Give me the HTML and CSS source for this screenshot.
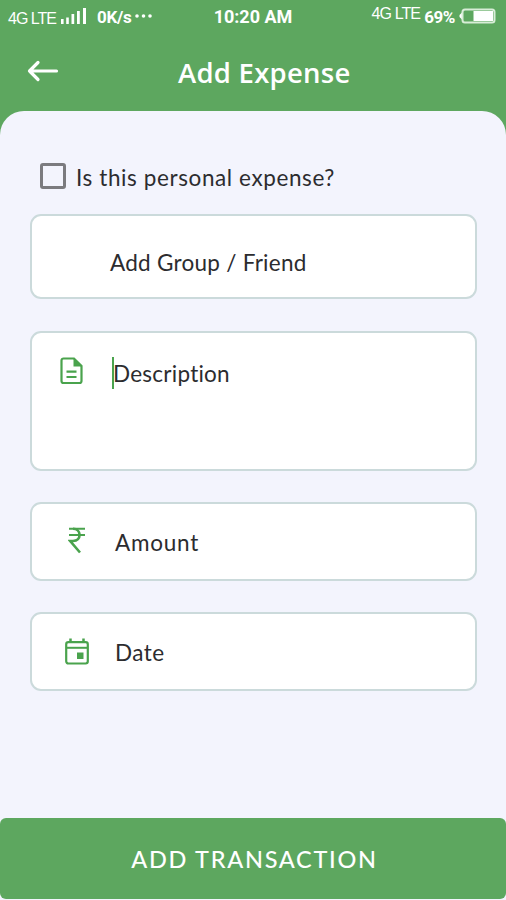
FILE: index.html
```html
<!DOCTYPE html>
<html lang="en">
<head>
<meta charset="utf-8">
<title>Add Expense</title>
<link rel="stylesheet" href="styles.css">
</head>
<body>
<div class="screen">
  <div class="status">
    <div class="status-left">
      <span class="net">4G LTE</span>
      <svg class="signal" width="28" height="18" viewBox="0 0 28 18" fill="#fff"><path d="M1 12h2.6v5H1zM6.2 10.500h2.600v6.500h-2.600zM11.500 7h2.700v10h-2.700zM17 4h2.800v13H17zM23 1h3v16h-3z"/></svg>
      <span class="speed">0K/s</span>
      <svg class="dots" width="19" height="4" viewBox="0 0 19 4" fill="#fff"><circle cx="2" cy="2" r="1.800"/><circle cx="8.500" cy="2" r="1.800"/><circle cx="15" cy="2" r="1.800"/></svg>
    </div>
    <span class="clock">10:20 AM</span>
    <div class="status-right">
      <span class="net net-right">4G LTE</span>
      <span class="battery-text">69%</span>
      <svg class="battery" width="37" height="16" viewBox="0 0 37 16"><path d="M3 4.500L0.500 7v2L3 11.500z" fill="#fff"/><rect x="3.500" y="1.500" width="32" height="13" rx="2.500" fill="none" stroke="#d8edd7" stroke-width="2"/><path d="M14.500 3h19.500v10H14.500z" fill="#fff"/></svg>
    </div>
  </div>
  <header class="header">
    <svg class="back" width="32" height="22" viewBox="0 0 32 22" fill="none" stroke="#fff" stroke-width="3.200" stroke-linecap="round" stroke-linejoin="round"><path d="M29.500 11H2.500M11 2.500L2.500 11l8.500 8.500"/></svg>
    <h1 class="title">Add Expense</h1>
  </header>
  <main class="sheet">
    <label class="check-row"><span class="box"></span><span class="text question">Is this personal expense?</span></label>
    <div class="field group"><span class="text group-text">Add Group / Friend</span></div>
    <div class="field description">
      <svg class="icon" width="24" height="28" viewBox="0 0 24 28" fill="none" stroke="#4aa34d"><path d="M3.500 1.500h10.500l7.500 7.500v15a2 2 0 0 1-2 2h-16a2 2 0 0 1-2-2v-20.500a2 2 0 0 1 2-2z" stroke-width="2.200"/><path d="M13.500 1.500v8h8z" fill="#4aa34d" stroke="none"/><path d="M6.500 14.700h10M6.500 20h10" stroke-width="2.200"/></svg>
      <span class="caret"></span><span class="text description-text">Description</span>
    </div>
    <div class="field amount">
      <svg class="icon" width="18" height="28" viewBox="0 0 18 28" fill="none" stroke="#4aa34d"><path d="M1 1.800h16M1 8h16" stroke-width="2"/><path d="M5 1.800c8.500 0 9 12 0 12.200H2.200L12 25.500" stroke-width="2.600"/></svg>
      <span class="text amount-text">Amount</span>
    </div>
    <div class="field date">
      <svg class="icon" width="24" height="27" viewBox="0 0 24 27" fill="none" stroke="#4aa34d"><rect x="1.200" y="4.200" width="21.600" height="21.300" rx="2.200" stroke-width="2.200"/><path d="M1 9.800h22" stroke-width="2"/><path d="M5.500 0.500v3.500M18.500 0.500v3.500" stroke-width="2.500"/><path d="M12 14.500h6.500V21H12z" fill="#4aa34d" stroke="none"/></svg>
      <span class="text date-text">Date</span>
    </div>
  </main>
  <div class="footer"><button class="submit"><span class="submit-text">ADD TRANSACTION</span></button></div>
</div>
</body>
</html>
```

FILE: styles.css
```css
* { box-sizing: border-box; }
body { margin: 0; background: #f3f4fd; }
.screen { width: 506px; height: 900px; display: flex; flex-direction: column; overflow: hidden; background: linear-gradient(#5da75f 0 150px, #f3f4fd 150px); }
.status { height: 34px; display: grid; grid-template-columns: 1fr auto 1fr; color: #fff; font-family: Roboto, sans-serif; white-space: nowrap; }
.status-left, .status-right { display: flex; align-items: flex-start; }
.status-left { padding-left: 8px; }
.status-right { justify-content: flex-end; padding-right: 10px; }
.net { font: 16px/18px "Liberation Sans", sans-serif; letter-spacing: -1px; margin-top: 10px; }
.net-right { letter-spacing: -0.900px; margin-top: 5px; margin-right: 4px; }
.signal { margin: 7px 0 0 4px; }
.speed { font-size: 17px; line-height: 20px; font-weight: 700; letter-spacing: -0.300px; margin: 7px 0 0 9px; }
.dots { margin: 14px 0 0 4px; }
.clock { font-size: 18px; line-height: 20px; font-weight: 700; margin-top: 7px; }
.battery-text { font-size: 17px; line-height: 20px; font-weight: 700; letter-spacing: -0.400px; margin-top: 7px; }
.battery { margin: 8px 0 0 4px; }
.header { height: 77px; display: grid; grid-template-columns: 178px 1fr; align-items: start; }
.back { margin: 26px 0 0 27px; }
.title { margin: 21px 0 0; color: #fff; font: 650 27.500px/36px "Open Sans", sans-serif; letter-spacing: 0.250px; white-space: nowrap; }
.sheet { height: 707px; padding: 52px 29px 0 30px; display: flex; flex-direction: column; background: #f3f4fd; border-radius: 24px 24px 0 0; }
.check-row { height: 51px; display: flex; align-items: flex-start; padding-left: 10px; }
.box { width: 26px; height: 26px; border: 3px solid #7b7b7f; border-radius: 3px; }
.text { color: #2c2c2f; font: 22.500px/29px Lato, sans-serif; font-variant-ligatures: none; white-space: nowrap; }
.question { margin-left: 10px; letter-spacing: 0.600px; }
.group-text { letter-spacing: 0.260px; }
.field { display: flex; align-items: flex-start; flex: none; background: #fff; border: 2px solid #cbdadb; border-radius: 11px; margin-bottom: 32px; }
.group { height: 85px; padding: 32px 0 0 78px; }
.description { height: 140px; padding: 24px 0 0 28px; margin-bottom: 31px; }
.caret { width: 2px; height: 32px; margin-left: 28px; background: #4aa34d; }
.description-text { margin: 2px 0 0 -1px; letter-spacing: 0.250px; }
.amount { height: 79px; padding: 23px 0 0 36px; margin-bottom: 31px; }
.amount-text { margin: 1px 0 0 29px; letter-spacing: 0.750px; }
.date { height: 79px; padding: 24px 0 0 33px; }
.date-text { margin-left: 26px; letter-spacing: 0.500px; }
.footer { height: 82px; }
.submit { width: 506px; height: 81px; border: 0; border-radius: 6px; padding: 0 0 0 3px; background: #5da75f; color: #fff; font: 500 23.500px/30px Lato, sans-serif; letter-spacing: 1.700px; }
```
